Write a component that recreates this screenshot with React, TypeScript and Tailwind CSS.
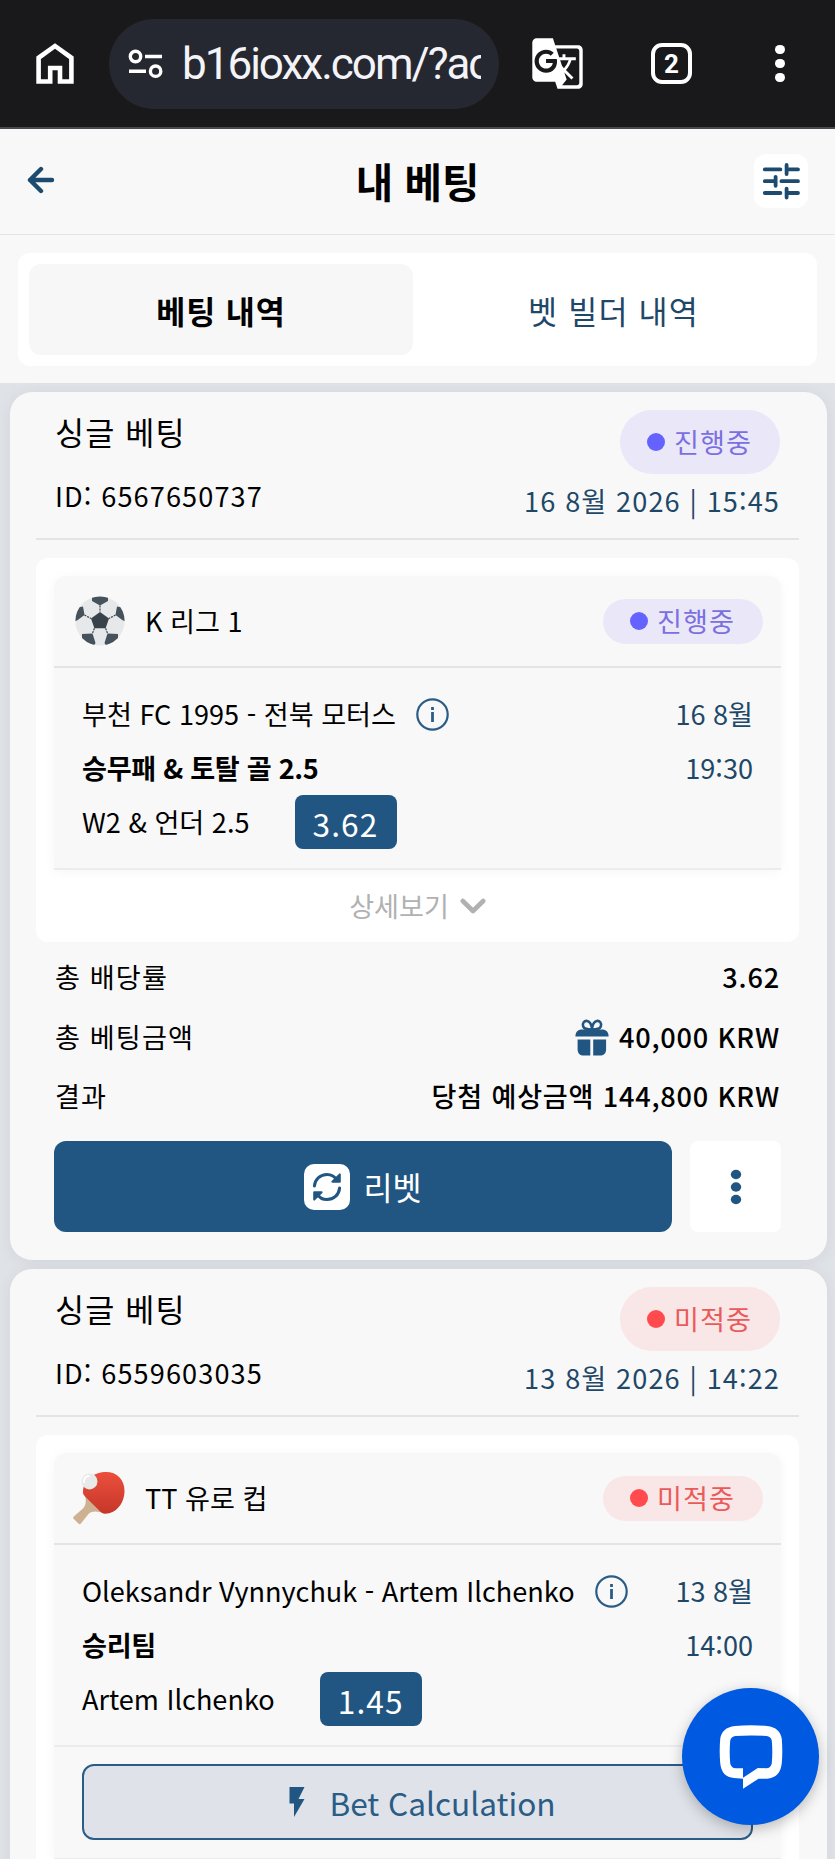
import type { ReactNode } from "react";
import { MdFlashOn, MdGTranslate } from "react-icons/md";

type Status = "pending" | "lost";

interface Bet {
  id: string;
  placedAt: string;
  status: Status;
  sport: ReactNode;
  league: string;
  match: string;
  market: string;
  pick: string;
  odds: string;
  day: string;
  time: string;
}

const statusStyles = {
  pending: { label: "진행중", pill: "bg-[#eae8f8] text-[#7a70e0]", dot: "bg-[#6563ff]" },
  lost: { label: "미적중", pill: "bg-[#f9e6e6] text-[#ea5a5a]", dot: "bg-[#ff4b4d]" },
};

function HomeIcon() {
  return (
    <svg width="38" height="42" viewBox="0 0 38 42" fill="none" stroke="#fff" strokeWidth="4.6">
      <path d="M2.6 38.5V14.8L19 3l16.4 11.8v23.7H24V25h-9.8v13.5z" />
    </svg>
  );
}

function SiteInfoIcon() {
  return (
    <svg width="36" height="30" viewBox="0 0 36 30" fill="none" stroke="#fff" strokeWidth="3.4">
      <circle cx="7.5" cy="7.5" r="5.2" />
      <path d="M17 7.5h17M1 22.2h17" />
      <circle cx="27.6" cy="22.2" r="5.2" />
    </svg>
  );
}

function BackIcon() {
  return (
    <svg width="28" height="28" viewBox="0 0 28 28" fill="none" stroke="#1d4a6f" strokeWidth="4.4" strokeLinecap="round" strokeLinejoin="round">
      <path d="M25 14H3M14 3L3 14l11 11" />
    </svg>
  );
}

function TuneIcon() {
  return (
    <svg width="38" height="38" viewBox="0 0 38 38" fill="none" stroke="#1d4a6f" strokeWidth="3.8" strokeLinecap="round">
      <path d="M2.8 7.4h15.6M25 7.4h11M24.6 3v9" />
      <path d="M2.8 19.2h9.6M19.4 19.2H36M13.6 14.8v9" />
      <path d="M2.8 31h15.6M25 31h11M24.6 26.6v9" />
    </svg>
  );
}

function InfoIcon() {
  return (
    <svg width="33" height="33" viewBox="0 0 33 33" fill="none" stroke="#2a5c86" className="shrink-0">
      <circle cx="16.5" cy="16.5" r="15.2" strokeWidth="2.2" />
      <path d="M16.5 14v10" strokeWidth="2.8" />
      <path d="M16.5 9v3" strokeWidth="2.8" />
    </svg>
  );
}

function ChevronIcon() {
  return (
    <svg width="26" height="17" viewBox="0 0 26 17" fill="none" stroke="#b1b1b1" strokeWidth="4.6" strokeLinecap="round" strokeLinejoin="round">
      <path d="M2.8 3L13 13 23.2 3" />
    </svg>
  );
}

function GiftIcon() {
  return (
    <svg width="34" height="37" viewBox="0 0 34 37" fill="#215682">
      <path d="M0.4 17.6C0.4 12.5 3 10.4 7 10.4h20c4 0 6.6 2.1 6.6 7.2z" />
      <path d="M2.6 20.6h12.7v16H9c-4 0-6.4-2.4-6.4-6.2zM18.2 20.6h12.9v9.8c0 3.8-2.4 6.2-6.4 6.2h-6.5z" />
      <path
        d="M17 10.5c-2 0-7.6.2-8.8-3C6.9 4 9.5 1.5 12.2 2c3.2.6 4.5 4.5 4.8 8.5zM17 10.5c2 0 7.6.2 8.8-3 1.3-3.5-1.3-6-4-5.5-3.2.6-4.5 4.5-4.8 8.5z"
        fill="#f8f8f8"
        stroke="#215682"
        strokeWidth="2.6"
      />
    </svg>
  );
}

function RefreshIcon() {
  return (
    <svg width="30" height="30" viewBox="0 0 30 30" fill="none" stroke="#215682" strokeWidth="3" strokeLinecap="round" strokeLinejoin="round">
      <path d="M2.4 14C3 7 8.5 2.4 15 2.4c4.5 0 7.8 2 10.4 6" />
      <path d="M27.6 16C27 23 21.5 27.6 15 27.6c-4.5 0-7.8-2-10.4-6" />
      <path d="M27.8 2.4v7.4h-7.4zM2.2 27.6v-7.4h7.4z" fill="#215682" strokeWidth="2" />
    </svg>
  );
}

function DotsIcon() {
  return (
    <svg width="12" height="36" viewBox="0 0 12 36" fill="#215682">
      <ellipse cx="6" cy="5.5" rx="5.2" ry="4.7" />
      <ellipse cx="6" cy="18" rx="5.2" ry="4.7" />
      <ellipse cx="6" cy="30.5" rx="5.2" ry="4.7" />
    </svg>
  );
}

function SoccerBall() {
  return (
    <svg width="50" height="50" viewBox="0 0 50 50" className="ml-0.5">
      <clipPath id="ball">
        <circle cx="25" cy="25" r="24.6" />
      </clipPath>
      <g clipPath="url(#ball)">
        <rect width="50" height="50" fill="#e6e8ea" />
        <g fill="#45525b">
          <path d="M17 0h16v5l-8 4.5L17 5z" />
          <path d="M0 12l8-1.5 1.5 8.5L2 24.5 0 25z" />
          <path d="M50 12l-8-1.5-1.5 8.5 7.5 5.5 2 .5z" />
          <path d="M7 38l10.5-.5 3 9.5-2 3H7z" />
          <path d="M43 38l-10.5-.5-3 9.5 2 3H43z" />
        </g>
        <path d="M25 16l9 6.5-3.4 9.8H19.4L16 22.5z" fill="#37424b" />
        <path d="M25 9.5V16M9.5 19l6.5 3.5M40.5 19L34 22.5M19.4 32.3l-2 5.2M30.6 32.3l2 5.2" stroke="#37424b" strokeWidth="1.2" strokeDasharray="2 1" />
      </g>
    </svg>
  );
}

function TableTennisBat() {
  return (
    <svg width="54" height="54" viewBox="0 0 54 54">
      <defs>
        <linearGradient id="rubber" x1="0" y1="0" x2="0" y2="1">
          <stop offset="0" stopColor="#ec4f3c" />
          <stop offset="1" stopColor="#c5372a" />
        </linearGradient>
      </defs>
      <path d="M12 24c1 5 1.5 9-1.5 13L.6 45.8c-.6.6-.6 1.4 0 2l5 4.9c.7.6 1.5.6 2.1 0l8-9.9c3.5-3.5 9.5-2.5 15.5-.5z" fill="#cdb191" />
      <path d="M10 20C11 8 22 1 33 1c11 0 18.5 7.5 18.5 19S44 42.5 32 42.8c-2.5 0-4-1.5-6-3.5L12 25.5c-1.5-1.5-2.2-3-2-5.5z" fill="url(#rubber)" />
      <circle cx="16.5" cy="10.4" r="8" fill="#e8eaea" />
      <path d="M11 11c-.3-3.5 2-6 5-6" stroke="#fff" strokeWidth="2" fill="none" strokeLinecap="round" />
    </svg>
  );
}

function ChatIcon() {
  return (
    <svg width="66" height="66" viewBox="0 0 66 66">
      <path d="M25 54.7L16 54C8 53.5 3 48.5 2.2 39q-1-12 0-24C3 8 8 2.8 17 2q16-1.6 32 0C58 2.8 63 8 63.8 15q1 12.5 0 24C63 48.5 58 54 49 54.7l-8.500.1L25 64.7z" fill="#fff" />
      <path d="M17.5 12q15.5-1 31 0 4.5.5 5.3 4.7 1 11 0 22.5-.8 5-5.8 5l-8.2-.2L25 53.7v-9.5h-7q-5 0-5.8-5-1-11.5 0-22.5.8-4.2 5.3-4.7z" fill="#0059e1" />
    </svg>
  );
}

function StatusPill({ status, size }: { status: Status; size: "sm" | "lg" }) {
  const style = statusStyles[status];
  return (
    <span className={`flex w-40 shrink-0 items-center rounded-full pl-[27px] tracking-[1.13px] ${size === "lg" ? "h-16" : "h-[45px]"} ${style.pill}`}>
      <span className={`size-[18px] rounded-full ${style.dot}`} />
      <span className="ml-[9px]">{style.label}</span>
    </span>
  );
}

function BetCard({ bet, action, details, children }: { bet: Bet; action?: ReactNode; details?: ReactNode; children?: ReactNode }) {
  return (
    <article className="ml-[10px] w-[817px] rounded-[22px] bg-[#f8f8f8] pr-7 pl-[26px] shadow-[0_2px_14px_rgba(60,60,80,0.08)]">
      <header className="flex h-[148px] justify-between border-b-2 border-[#e2e4e7] px-[19px] tracking-[1.13px]">
        <div className="flex flex-col">
          <h2 className="mt-[17px] text-[31.6px] leading-[44px]">싱글 베팅</h2>
          <p className="mt-[25px] leading-9">ID: {bet.id}</p>
        </div>
        <div className="flex flex-col items-end pt-[18px]">
          <StatusPill status={bet.status} size="lg" />
          <p className="mt-[9px] leading-9 text-[#1f4868]">{bet.placedAt}</p>
        </div>
      </header>

      <section className="mt-[18px] rounded-xl bg-white px-[18px] pt-[18px]">
        <div className="rounded-t-xl bg-[#f8f8f8] shadow-[0_2px_12px_rgba(0,0,0,0.04)]">
          <div className="flex h-[92px] items-center justify-between border-b-2 border-[#e2e4e7] pr-[18px] pl-[19px]">
            <div className="flex items-center">
              <div className="flex w-[72px]">{bet.sport}</div>
              <span>{bet.league}</span>
            </div>
            <StatusPill status={bet.status} size="sm" />
          </div>
          <div className="flex h-[202px] justify-between border-b-2 border-[#eaecee] px-7 pt-[19px] leading-[54px]">
            <div>
              <div className="flex items-center gap-5 whitespace-nowrap">
                <span>{bet.match}</span>
                <InfoIcon />
              </div>
              <p className="font-bold tracking-[-0.3px]">{bet.market}</p>
              <div className="flex items-center gap-[45px]">
                <span>{bet.pick}</span>
                <span className="h-[54px] w-[102px] rounded-lg bg-[#215682] pt-px text-center text-[31.6px] tracking-[1.13px] text-white">{bet.odds}</span>
              </div>
            </div>
            <div className="shrink-0 text-right text-[#1f4868]">
              <p>{bet.day}</p>
              <p>{bet.time}</p>
            </div>
          </div>
          {action}
        </div>
        <div className="flex h-[72px] items-center justify-center gap-[11px] text-[#b1b1b1]">{details}</div>
      </section>
      {children}
    </article>
  );
}

function TotalRow({ label, children }: { label: string; children: ReactNode }) {
  return (
    <div className="flex h-[59.5px] items-center justify-between">
      <dt className="tracking-[1.13px]">{label}</dt>
      <dd className="flex items-center gap-[10px] font-medium tracking-[0.8px]">{children}</dd>
    </div>
  );
}

const bets: Bet[] = [
  {
    id: "6567650737",
    placedAt: "16 8월 2026 | 15:45",
    status: "pending",
    sport: <SoccerBall />,
    league: "K 리그 1",
    match: "부천 FC 1995 - 전북 모터스",
    market: "승무패 & 토탈 골 2.5",
    pick: "W2 & 언더 2.5",
    odds: "3.62",
    day: "16 8월",
    time: "19:30",
  },
  {
    id: "6559603035",
    placedAt: "13 8월 2026 | 14:22",
    status: "lost",
    sport: <TableTennisBat />,
    league: "TT 유로 컵",
    match: "Oleksandr Vynnychuk - Artem Ilchenko",
    market: "승리팀",
    pick: "Artem Ilchenko",
    odds: "1.45",
    day: "13 8월",
    time: "14:00",
  },
];

export default function App() {
  return (
    <div lang="ko" className="relative h-[1859px] w-[835px] overflow-hidden bg-[#dfe3e8] font-['Noto_Sans_CJK_KR',sans-serif] text-[27.1px] text-black">
      <div className="flex h-[129px] items-center border-b-2 border-[#4b4751] bg-[#19191b] pl-9">
        <HomeIcon />
        <div className="ml-[35px] flex h-[90px] w-[390px] items-center rounded-full bg-[#252830] pl-[19px]">
          <SiteInfoIcon />
          <span className="ml-[18px] w-[299px] overflow-hidden font-['Roboto',sans-serif] text-[44px] leading-[60px] tracking-[-2px] whitespace-nowrap text-[#f4f4f8]">
            b16ioxx.com/?ac
          </span>
        </div>
        <MdGTranslate size={55} color="#fff" className="ml-[31px]" />
        <span className="ml-[66px] flex size-[41px] items-center justify-center rounded-[11px] border-[4.5px] border-white font-['Roboto',sans-serif] text-[26px] leading-none font-bold text-white">
          2
        </span>
        <div className="ml-[83px] flex flex-col gap-[4.5px]">
          <span className="size-[9.5px] rounded-full bg-white" />
          <span className="size-[9.5px] rounded-full bg-white" />
          <span className="size-[9.5px] rounded-full bg-white" />
        </div>
      </div>

      <header className="flex h-[106px] items-center justify-between border-b border-[#e4e5e7] bg-[#f8f8f8] px-[27px]">
        <div className="w-[54px] pb-[3px]">
          <BackIcon />
        </div>
        <h1 className="text-[40.7px] leading-none font-bold">내 베팅</h1>
        <button className="mb-px flex size-[54px] items-center justify-center rounded-xl bg-white">
          <TuneIcon />
        </button>
      </header>

      <nav className="h-[148px] bg-[#f8f8f8] px-[18px] pt-[18px] text-[31.6px] tracking-[1.13px]">
        <div className="flex h-[113px] rounded-xl bg-white p-[11px]">
          <button className="h-[91px] w-[384px] rounded-xl bg-[#f7f7f7] pt-0.5 font-bold tracking-[0.9px]">베팅 내역</button>
          <button className="ml-2 h-[91px] flex-1 pt-0.5 text-[#1f4868]">벳 빌더 내역</button>
        </div>
      </nav>

      <main className="flex flex-col gap-[9px] pt-[9px]">
        <BetCard
          bet={bets[0]}
          details={
            <>
              상세보기
              <ChevronIcon />
            </>
          }
        >
          <dl className="px-[19px] pt-[6px]">
            <TotalRow label="총 배당률">3.62</TotalRow>
            <TotalRow label="총 베팅금액">
              <GiftIcon />
              40,000 KRW
            </TotalRow>
            <TotalRow label="결과">당첨 예상금액 144,800 KRW</TotalRow>
          </dl>
          <div className="flex gap-[18px] px-[18px] pt-[14.5px] pb-[28px]">
            <button className="flex h-[91px] flex-1 items-center justify-center gap-[13px] rounded-xl bg-[#215682] text-[31.6px] text-white">
              <span className="flex size-[46px] items-center justify-center rounded-[10px] bg-white">
                <RefreshIcon />
              </span>
              <span className="pt-px">리벳</span>
            </button>
            <button className="flex size-[91px] items-center justify-center rounded-lg bg-white">
              <DotsIcon />
            </button>
          </div>
        </BetCard>

        <BetCard
          bet={bets[1]}
          action={
            <div className="border-b-2 border-[#e9ebed] px-7 pt-[17px] pb-[18px]">
              <button className="flex h-[76px] w-full items-center justify-center gap-[14px] rounded-xl border-2 border-[#2a5c86] bg-[#dfe3e9] text-[31.6px] text-[#2a5c86]">
                <MdFlashOn size={36} color="#215682" />
                <span className="pt-px">Bet Calculation</span>
              </button>
            </div>
          }
        />
      </main>

      <button className="absolute top-[1688px] left-[682px] flex size-[137px] items-center justify-center rounded-full bg-[#0059e1] shadow-[0_4px_14px_rgba(0,0,0,0.25)]">
        <ChatIcon />
      </button>
    </div>
  );
}
